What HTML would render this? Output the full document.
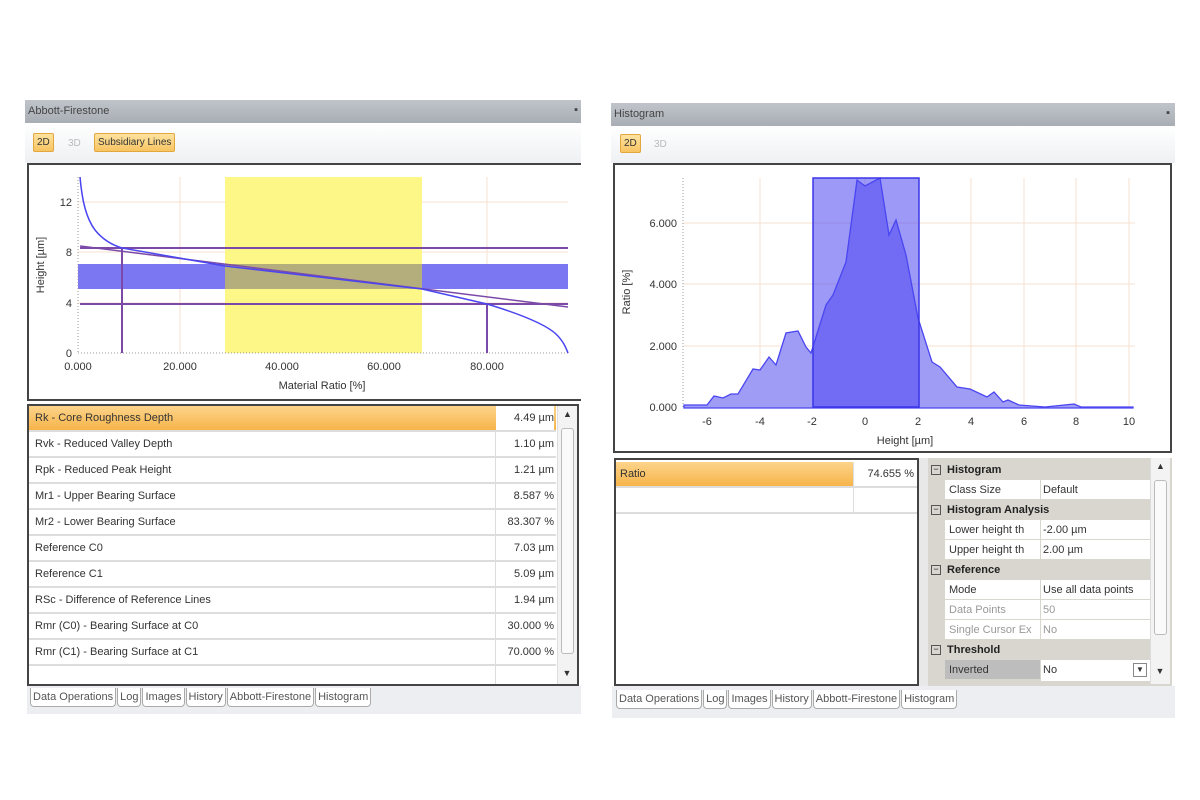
<!DOCTYPE html>
<html><head><meta charset="utf-8"><style>
*{margin:0;padding:0;box-sizing:border-box}
body{width:1200px;height:800px;background:#fff;position:relative;font-family:"Liberation Sans",sans-serif;font-size:11px;color:#333;overflow:hidden}
.a{position:absolute}
.title{background:linear-gradient(#c0c4ca,#a9aeb5);color:#444;font-size:11px;padding:5px 3px;}
.btn{position:absolute;background:linear-gradient(#fde3a0,#f8c462);border:1px solid #e3a740;border-radius:2px;font-size:10px;color:#333;padding:3px 3px}
.row{position:absolute;left:0;height:26px;border-bottom:2px solid #ddd;font-size:11px;line-height:24px}
.tabs span{display:inline-block;border:1px solid #aaa;border-top:none;border-radius:0 0 4px 4px;padding:3px 2px;margin-right:1px;background:#fff;font-size:11px;color:#555}
.pg{position:absolute;left:0;width:222px;height:20px;line-height:20px;font-size:11px}
.pg.h{background:#d9d6cf;font-weight:bold;color:#222}
.pg .k{position:absolute;left:17px;width:95px;background:#fff;height:19px;padding-left:4px;overflow:hidden;white-space:nowrap}
.pg .v{position:absolute;left:113px;width:109px;background:#fff;height:19px;padding-left:2px;white-space:nowrap;overflow:hidden}
.pg .b{position:absolute;left:3px;top:5px;width:10px;height:10px;border:1px solid #555;font-size:9px;line-height:7px;text-align:center;font-weight:normal}
</style></head><body>

<!-- LEFT PANEL -->
<div class="a title" style="left:25px;top:100px;width:556px;height:23px">Abbott-Firestone<span style="position:absolute;right:3px;top:4px">▪</span></div>
<div class="a" style="left:25px;top:123px;width:556px;height:40px;background:linear-gradient(#fff,#eef0f3)"></div>
<div class="btn" style="left:33px;top:133px">2D</div>
<div class="a" style="left:68px;top:138px;color:#bbb;font-size:10px">3D</div>
<div class="btn" style="left:94px;top:133px">Subsidiary Lines</div>
<div class="a" style="left:27px;top:163px;width:554px;height:238px;border:2px solid #444;border-right:none;background:#fff"></div>
<svg class="a" style="left:0;top:0" width="600" height="420">
<g stroke="#f7e2d0" stroke-width="1">
<line x1="180" y1="177" x2="180" y2="353"/><line x1="282" y1="177" x2="282" y2="353"/><line x1="384" y1="177" x2="384" y2="353"/><line x1="487" y1="177" x2="487" y2="353"/>
<line x1="78" y1="202" x2="568" y2="202"/><line x1="78" y1="252" x2="568" y2="252"/><line x1="78" y1="303" x2="568" y2="303"/>
</g>
<rect x="225" y="177" width="197" height="176" fill="#fdf787"/>
<rect x="78" y="264" width="490" height="25" fill="#7b76f2"/>
<rect x="225" y="264" width="197" height="25" fill="#b4ae7d"/>
<line x1="78" y1="177" x2="78" y2="353" stroke="#999" stroke-dasharray="1,2"/>
<line x1="78" y1="353" x2="568" y2="353" stroke="#999" stroke-dasharray="1,2"/>
<g stroke="#7b4aa8" stroke-width="2" fill="none">
<line x1="80" y1="248" x2="568" y2="248"/><line x1="80" y1="304" x2="568" y2="304"/>
<line x1="122" y1="248" x2="122" y2="353"/><line x1="487" y1="304" x2="487" y2="353"/>
<line x1="80" y1="246" x2="568" y2="307" stroke-width="1.5"/>
</g>
<path d="M80 177 C82 200 86 218 95 230 C103 240 112 245 122 248 L225 266 L422 289 L487 304 C520 314 545 324 556 334 C564 342 566 348 568 353" fill="none" stroke="#4a45f0" stroke-width="1.5"/>
<g font-size="11" fill="#333" font-family="Liberation Sans">
<text x="72" y="206" text-anchor="end">12</text><text x="72" y="256" text-anchor="end">8</text><text x="72" y="307" text-anchor="end">4</text><text x="72" y="357" text-anchor="end">0</text>
<text x="78" y="370" text-anchor="middle">0.000</text><text x="180" y="370" text-anchor="middle">20.000</text><text x="282" y="370" text-anchor="middle">40.000</text><text x="384" y="370" text-anchor="middle">60.000</text><text x="487" y="370" text-anchor="middle">80.000</text>
<text x="322" y="389" text-anchor="middle">Material Ratio [%]</text>
<text transform="translate(44,265) rotate(-90)" text-anchor="middle">Height [µm]</text>
</g>
</svg>

<div class="a" style="left:27px;top:404px;width:552px;height:282px;border:2px solid #444;background:#fff;overflow:hidden">
 <div class="a" style="left:466px;top:0;width:1px;height:280px;background:#ddd"></div>
 <div class="row" style="top:0;width:527px;background:linear-gradient(#fcd48a,#f7b44a);border-bottom:2px solid #ddd"><span style="margin-left:6px">Rk - Core Roughness Depth</span><span style="position:absolute;left:467px;width:58px;text-align:right;background:#fff;height:24px">4.49 µm</span></div>
 <div class="row" style="top:26px;width:527px"><span style="margin-left:6px">Rvk - Reduced Valley Depth</span><span style="position:absolute;right:2px">1.10 µm</span></div>
 <div class="row" style="top:52px;width:527px"><span style="margin-left:6px">Rpk - Reduced Peak Height</span><span style="position:absolute;right:2px">1.21 µm</span></div>
 <div class="row" style="top:78px;width:527px"><span style="margin-left:6px">Mr1 - Upper Bearing Surface</span><span style="position:absolute;right:2px">8.587 %</span></div>
 <div class="row" style="top:104px;width:527px"><span style="margin-left:6px">Mr2 - Lower Bearing Surface</span><span style="position:absolute;right:2px">83.307 %</span></div>
 <div class="row" style="top:130px;width:527px"><span style="margin-left:6px">Reference C0</span><span style="position:absolute;right:2px">7.03 µm</span></div>
 <div class="row" style="top:156px;width:527px"><span style="margin-left:6px">Reference C1</span><span style="position:absolute;right:2px">5.09 µm</span></div>
 <div class="row" style="top:182px;width:527px"><span style="margin-left:6px">RSc - Difference of Reference Lines</span><span style="position:absolute;right:2px">1.94 µm</span></div>
 <div class="row" style="top:208px;width:527px"><span style="margin-left:6px">Rmr (C0) - Bearing Surface at C0</span><span style="position:absolute;right:2px">30.000 %</span></div>
 <div class="row" style="top:234px;width:527px"><span style="margin-left:6px">Rmr (C1) - Bearing Surface at C1</span><span style="position:absolute;right:2px">70.000 %</span></div>
 <div class="a" style="left:528px;top:0;width:20px;height:280px;background:#f3f3f3;border-left:1px solid #ddd">
  <div style="text-align:center;font-size:9px;margin-top:3px">▲</div>
  <div class="a" style="left:3px;top:22px;width:13px;height:226px;border:1px solid #bbb;border-radius:3px;background:#fafafa"></div>
  <div class="a" style="left:0;top:262px;width:18px;text-align:center;font-size:9px">▼</div>
 </div>
</div>
<div class="a" style="left:27px;top:686px;width:554px;height:28px;background:#eceef1"></div>
<div class="a tabs" style="left:30px;top:688px"><span>Data Operations</span><span>Log</span><span>Images</span><span>History</span><span>Abbott-Firestone</span><span>Histogram</span></div>

<!-- RIGHT PANEL -->
<div class="a title" style="left:611px;top:103px;width:564px;height:23px">Histogram<span style="position:absolute;right:5px;top:4px">▪</span></div>
<div class="a" style="left:611px;top:126px;width:564px;height:37px;background:linear-gradient(#fff,#eef0f3)"></div>
<div class="btn" style="left:620px;top:134px">2D</div>
<div class="a" style="left:654px;top:139px;color:#bbb;font-size:10px">3D</div>
<div class="a" style="left:613px;top:163px;width:559px;height:290px;border:2px solid #444;background:#fff"></div>
<svg class="a" style="left:0;top:0" width="1200" height="460">
<g stroke="#f7e2d0" stroke-width="1">
<line x1="760" y1="178" x2="760" y2="407"/><line x1="865" y1="178" x2="865" y2="407"/><line x1="971" y1="178" x2="971" y2="407"/><line x1="1024" y1="178" x2="1024" y2="407"/><line x1="1076" y1="178" x2="1076" y2="407"/><line x1="1129" y1="178" x2="1129" y2="407"/>
<line x1="683" y1="223" x2="1135" y2="223"/><line x1="683" y1="284" x2="1135" y2="284"/><line x1="683" y1="346" x2="1135" y2="346"/>
</g>
<line x1="683" y1="178" x2="683" y2="407" stroke="#999" stroke-dasharray="1,2"/>
<path d="M684 405 L707 405 L714 396 L723 398 L731 394 L738 394 L753 369 L760 370 L769 357 L776 365 L786 333 L798 331 L806 347 L811 353 L826 305 L833 295 L846 262 L857 180 L865 186 L880 178 L889 235 L896 220 L906 255 L918 318 L932 362 L940 367 L957 387 L970 389 L987 397 L994 392 L1003 402 L1008 400 L1019 405 L1045 407 L1074 404 L1081 407 L1133 407 L1133 408 L684 408 Z" fill="#9f9cf5" stroke="#4a45f0" stroke-width="1.3"/>
<rect x="813" y="178" width="106" height="229" fill="#4a45f0" fill-opacity="0.55" stroke="#3a35e8" stroke-width="1.5"/>
<g font-size="11" fill="#333" font-family="Liberation Sans">
<text x="677" y="227" text-anchor="end">6.000</text><text x="677" y="288" text-anchor="end">4.000</text><text x="677" y="350" text-anchor="end">2.000</text><text x="677" y="411" text-anchor="end">0.000</text>
<text x="707" y="425" text-anchor="middle">-6</text><text x="760" y="425" text-anchor="middle">-4</text><text x="812" y="425" text-anchor="middle">-2</text><text x="865" y="425" text-anchor="middle">0</text><text x="918" y="425" text-anchor="middle">2</text><text x="971" y="425" text-anchor="middle">4</text><text x="1024" y="425" text-anchor="middle">6</text><text x="1076" y="425" text-anchor="middle">8</text><text x="1129" y="425" text-anchor="middle">10</text>
<text x="905" y="444" text-anchor="middle">Height [µm]</text>
<text transform="translate(630,292) rotate(-90)" text-anchor="middle">Ratio [%]</text>
</g>
</svg>

<div class="a" style="left:614px;top:458px;width:305px;height:228px;border:2px solid #444;background:#fff">
 <div class="a" style="left:0;top:2px;width:237px;height:24px;background:linear-gradient(#fcd48a,#f7b44a);line-height:24px;padding-left:4px">Ratio</div>
 <div class="a" style="left:238px;top:2px;width:63px;height:24px;line-height:24px;text-align:right;padding-right:3px">74.655 %</div>
 <div class="a" style="left:237px;top:2px;width:1px;height:51px;background:#ddd"></div>
 <div class="a" style="left:0;top:26px;width:301px;height:2px;background:#ddd"></div>
 <div class="a" style="left:0;top:52px;width:301px;height:2px;background:#ddd"></div>
</div>
<div class="a" style="left:919px;top:458px;width:9px;height:228px;background:#e8e8e8"></div>
<div class="a" style="left:928px;top:458px;width:244px;height:228px;background:#d9d6cf">
 <div class="pg h" style="top:2px"><span class="b">−</span><span style="margin-left:19px">Histogram</span></div>
 <div class="pg" style="top:22px"><span class="k">Class Size</span><span class="v">Default</span></div>
 <div class="pg h" style="top:42px"><span class="b">−</span><span style="margin-left:19px">Histogram Analysis</span></div>
 <div class="pg" style="top:62px"><span class="k">Lower height th</span><span class="v">-2.00 µm</span></div>
 <div class="pg" style="top:82px"><span class="k">Upper height th</span><span class="v">2.00 µm</span></div>
 <div class="pg h" style="top:102px"><span class="b">−</span><span style="margin-left:19px">Reference</span></div>
 <div class="pg" style="top:122px"><span class="k">Mode</span><span class="v">Use all data points</span></div>
 <div class="pg" style="top:142px;color:#999"><span class="k">Data Points</span><span class="v">50</span></div>
 <div class="pg" style="top:162px;color:#999"><span class="k">Single Cursor Ex</span><span class="v">No</span></div>
 <div class="pg h" style="top:182px"><span class="b">−</span><span style="margin-left:19px">Threshold</span></div>
 <div class="pg" style="top:202px;height:22px"><span class="k" style="background:#bdbdbd">Inverted</span><span class="v" style="height:21px">No<span style="position:absolute;right:3px;top:3px;border:1px solid #888;width:14px;height:14px;font-size:8px;line-height:12px;text-align:center">▼</span></span></div>
 <div class="a" style="left:222px;top:0;width:20px;height:226px;background:#f3f3f3;border-left:1px solid #ddd">
  <div style="text-align:center;font-size:9px;margin-top:3px">▲</div>
  <div class="a" style="left:3px;top:22px;width:13px;height:155px;border:1px solid #bbb;border-radius:3px;background:#fafafa"></div>
  <div class="a" style="left:0;top:208px;width:18px;text-align:center;font-size:9px">▼</div>
 </div>
</div>
<div class="a" style="left:612px;top:686px;width:563px;height:32px;background:#eceef1"></div>
<div class="a tabs" style="left:616px;top:690px"><span>Data Operations</span><span>Log</span><span>Images</span><span>History</span><span>Abbott-Firestone</span><span>Histogram</span></div>
</body></html>
